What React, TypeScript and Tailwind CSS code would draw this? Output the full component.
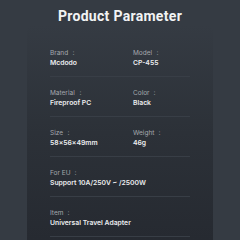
import React from "react";

const rows = [
  [
    ["Brand", "Mcdodo"],
    ["Model", "CP-455"],
  ],
  [
    ["Material", "Fireproof PC"],
    ["Color", "Black"],
  ],
  [
    ["Size", "58x56x49mm"],
    ["Weight", "46g"],
  ],
  [["For EU", "Support 10A/250V ~ /2500W"]],
  [["Item", "Universal Travel Adapter"]],
];

const App = () => {
  return (
    <div
      className="w-[240px] h-[240px] overflow-hidden bg-[#353b43] text-white"
      style={{ fontFamily: "Inter, 'Noto Sans', sans-serif" }}
    >
      {/* Title */}
      <h1
        className="h-[25px] pt-[6px] text-center text-[14px] leading-[20px] font-bold text-[#f2f3f4] tracking-[0.3px]"
        style={{ fontFamily: "Roboto, 'Noto Sans', sans-serif" }}
      >
        Product Parameter
      </h1>

      {/* Parameter card */}
      <div className="mx-[27px] h-[215px] pt-[12px] px-[23px] bg-gradient-to-b from-[#353b43] via-[#2c3138] to-[#262a31] rounded-t-[6px]">
        {rows.map((row, i) => (
          <div key={i} className="h-[40px] flex border-b border-[#383e46] pt-[12px]">
            {row.map(([label, value]) => (
              <div key={label} className="w-[83px] shrink-0 flex flex-col gap-[2px] whitespace-nowrap">
                <p className="text-[6.5px] leading-[8px] text-[#a4a8ae]">{label} ：</p>
                <p className="text-[6.8px] leading-[8px] font-semibold text-[#ecedef]">{value}</p>
              </div>
            ))}
          </div>
        ))}
      </div>
    </div>
  );
};

export default App;
